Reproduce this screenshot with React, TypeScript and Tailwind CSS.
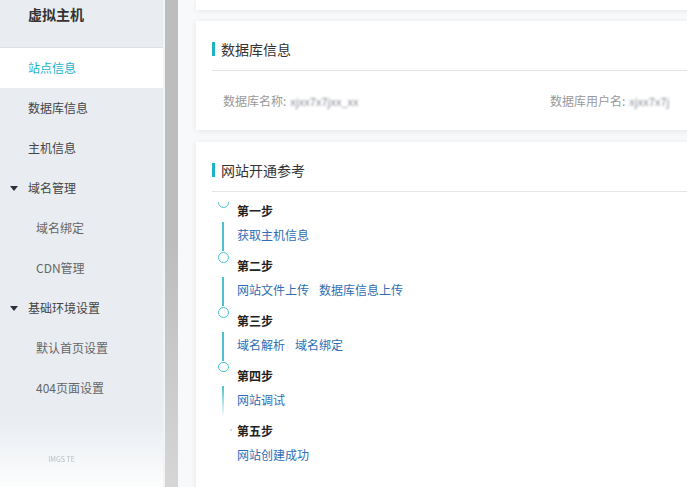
import React from "react";

const font = { fontFamily: '"Noto Sans CJK SC", "Noto Sans", sans-serif' };

type NavItem = { label: string; level: 0 | 1; group?: boolean; active?: boolean };

const navItems: NavItem[] = [
  { label: "站点信息", level: 0, active: true },
  { label: "数据库信息", level: 0 },
  { label: "主机信息", level: 0 },
  { label: "域名管理", level: 0, group: true },
  { label: "域名绑定", level: 1 },
  { label: "CDN管理", level: 1 },
  { label: "基础环境设置", level: 0, group: true },
  { label: "默认首页设置", level: 1 },
  { label: "404页面设置", level: 1 },
];

const steps = [
  { title: "第一步", links: ["获取主机信息"] },
  { title: "第二步", links: ["网站文件上传", "数据库信息上传"] },
  { title: "第三步", links: ["域名解析", "域名绑定"] },
  { title: "第四步", links: ["网站调试"] },
  { title: "第五步", links: ["网站创建成功"] },
];

function Sidebar() {
  return (
    <div className="w-[163px] shrink-0 bg-[#e9edf2] flex flex-col h-full">
      {/* 标题 */}
      <div className="h-[48px] pt-[4px] pl-[28px] border-b border-[#dde1e6] text-[14px] leading-[20px] font-bold text-[#333]">
        虚拟主机
      </div>
      {navItems.map(item => (
        <div
          key={item.label}
          className={`h-[40px] flex items-center text-[12px] ${item.active ? "bg-white text-[#1eb2c9]" : item.level === 1 ? "text-[#666]" : "text-[#444]"} ${item.level === 1 ? "pl-[36px]" : item.group ? "pl-[10px]" : "pl-[28px]"}`}
        >
          {item.group && (
            <span className="w-0 h-0 border-l-[4px] border-r-[4px] border-t-[5px] border-l-transparent border-r-transparent border-t-[#333] mr-[10px]"></span>
          )}
          {item.label}
        </div>
      ))}
      {/* 底部 */}
      <div className="flex-1 mt-[12px] bg-gradient-to-b from-[#e9edf2] to-[#fcfdfd] flex items-start justify-center pt-[34px]">
        <span className="text-[7px] text-[#b8bcc2] blur-[0.5px] -ml-[40px]">IMGS TE</span>
      </div>
    </div>
  );
}

function CardHeader({ title }: { title: string }) {
  return (
    <div className="pt-[21px] pb-[14px] ml-[16px] border-b border-[#e4e4e4] flex items-center">
      <span className="w-[3px] h-[14px] bg-[#1eb2c9] mr-[6px]"></span>
      <span className="text-[14px] leading-[14px] text-[#333]">{title}</span>
    </div>
  );
}

function Timeline() {
  return (
    <div className="mt-[10px] overflow-hidden pl-[21px]">
      <div className="-mt-[5px]">
        {steps.map((s, i) => (
          <div key={s.title} className="flex h-[55px]">
            <div className="w-[12px] flex flex-col items-center">
              {i < 4 ? (
                <div className="w-[11px] h-[11px] rounded-full border-[1.5px] border-[#4dc0d0] bg-white"></div>
              ) : (
                <div className="h-[11px]"></div>
              )}
              {i < 3 && <div className="mt-[14px] w-[1.5px] h-[29px] bg-[#4dc0d0]"></div>}
              {i === 3 && <div className="mt-[14px] w-[1.5px] h-[36px] bg-gradient-to-b from-[#4dc0d0] to-transparent"></div>}
            </div>
            <div className="ml-[8px] pt-[5px] relative">
              {i === 4 && <span className="absolute -left-[7px] top-[12px] w-[2px] h-[2px] rounded-full bg-[#ccc]"></span>}
              <div className="text-[12px] leading-[18px] font-bold text-[#222]">{s.title}</div>
              <div className="mt-[6px] flex gap-[10px] text-[12px] leading-[18px] text-[#2f6db5]">
                {s.links.map(l => (
                  <span key={l}>{l}</span>
                ))}
              </div>
            </div>
          </div>
        ))}
      </div>
    </div>
  );
}

export default function App() {
  return (
    <div style={font} className="w-[687px] h-[487px] flex overflow-hidden bg-white">
      <Sidebar />
      <div className="w-[2px] bg-[#f2f3f5] shrink-0"></div>
      <div className="w-[13px] bg-gradient-to-b from-[#bdbdbd] via-[#bdbdbd] to-[#d6d6d6] shrink-0"></div>

      {/* 主内容 */}
      <div className="flex-1 overflow-hidden bg-[#f8f9fa] pl-[18px]">
        <div className="w-[720px] flex flex-col">
          <div className="h-[10px] bg-white shadow-[0_1px_5px_rgba(0,0,0,0.08)]"></div>

          {/* 数据库信息 */}
          <div className="mt-[11px] h-[109px] bg-white shadow-[0_1px_6px_rgba(0,0,0,0.08)]">
            <CardHeader title="数据库信息" />
            <div className="pt-[20px] flex text-[12px] leading-[20px] text-[#999]">
              <div className="ml-[27px] w-[327px] flex">
                <span>数据库名称:</span>
                <span className="ml-[4px] blur-[1px] text-[#8a8f99] text-[11px]">xjxx7x7jxx_xx</span>
              </div>
              <div className="flex">
                <span>数据库用户名:</span>
                <span className="ml-[4px] blur-[1px] text-[#8a8f99] text-[11px]">xjxx7x7j</span>
              </div>
            </div>
          </div>

          {/* 网站开通参考 */}
          <div className="mt-[12px] h-[400px] bg-white shadow-[0_1px_6px_rgba(0,0,0,0.08)]">
            <CardHeader title="网站开通参考" />
            <Timeline />
          </div>
        </div>
      </div>
    </div>
  );
}
